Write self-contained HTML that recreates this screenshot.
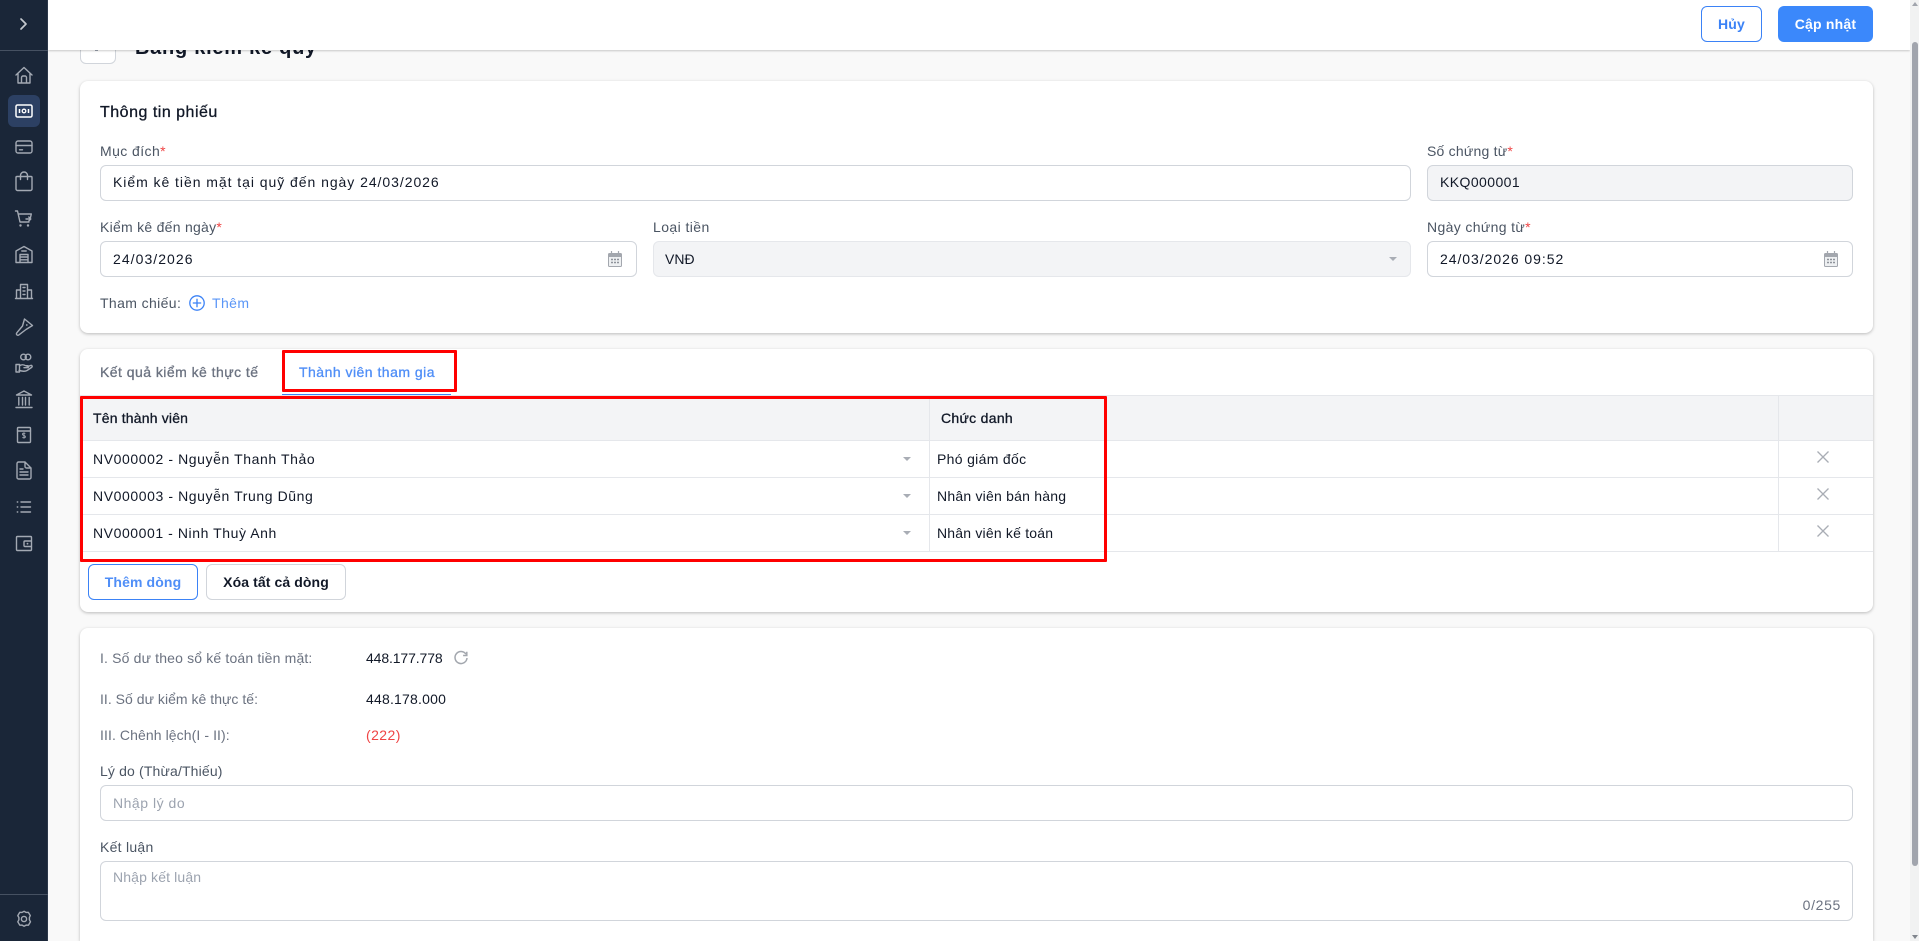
<!DOCTYPE html>
<html lang="vi"><head><meta charset="utf-8"><title>Bảng kiểm kê quỹ</title>
<style>
html,body{margin:0;padding:0;width:1919px;height:941px;overflow:hidden;background:#f9f9f9;font-family:"Liberation Sans",sans-serif;font-size:14px;color:#111827}
div,span{box-sizing:border-box}
.a{position:absolute}
.t{position:absolute;line-height:20px;height:20px;white-space:nowrap;letter-spacing:.42px}
.l{color:#4b5563}
.m{-webkit-text-stroke:.3px currentColor}
.card{position:absolute;background:#fff;border-radius:8px;box-shadow:0 1px 3px rgba(0,0,0,.25)}
.inp{position:absolute;border:1px solid #d1d5db;border-radius:6px;background:#fff}
.dis{background:#f3f4f6}
.req{color:#ef4444}
svg{position:absolute;overflow:visible}
.si{fill:none;stroke:#a3a9b3;stroke-width:1.4;stroke-linecap:round;stroke-linejoin:round}
.line{position:absolute;background:#e5e7eb}
.red{position:absolute;border:3px solid #f00;border-radius:1px}
.caret{position:absolute;width:0;height:0;border-left:4px solid transparent;border-right:4px solid transparent;border-top:4px solid #a9adb5}
</style></head><body>

<!-- page title under header -->
<div class="a" style="left:80px;top:20px;width:36px;height:44px;background:#fff;border:1px solid #d1d5db;border-radius:6px"></div>
<div class="a" style="left:95px;top:50px;width:3px;height:1px;background:#9ca3af"></div>
<div class="t" style="left:135px;top:38px;font-size:20px;font-weight:700;letter-spacing:.74px;color:#111827;line-height:20px">Bảng kiểm kê quỹ</div>

<!-- header -->
<div class="a" style="left:48px;top:0;width:1862px;height:50px;background:#fff;box-shadow:0 1px 2px rgba(0,0,0,.2)"></div>
<div class="a" style="left:1701px;top:6px;width:61px;height:36px;border:1px solid #3b82f6;border-radius:6px;background:#fff;color:#3b82f6;text-align:center;line-height:34px;font-weight:700;letter-spacing:.2px">Hủy</div>
<div class="a" style="left:1778px;top:6px;width:95px;height:36px;border-radius:6px;background:#3b88fb;color:#fff;text-align:center;line-height:36px;font-weight:700;letter-spacing:.2px">Cập nhật</div>

<!-- scrollbar -->
<div class="a" style="left:1910px;top:0;width:9px;height:941px;background:#f1f2f2"></div>
<div class="a" style="left:1912px;top:42px;width:6px;height:824px;background:#a1a5ad;border-radius:3px"></div>
<div class="a" style="left:1912px;top:2px;width:0;height:0;border-left:3px solid transparent;border-right:3px solid transparent;border-bottom:4px solid #a1a5ad"></div>
<div class="a" style="left:1912px;top:935px;width:0;height:0;border-left:3px solid transparent;border-right:3px solid transparent;border-top:4px solid #80858d"></div>

<!-- sidebar -->
<div class="a" style="left:0;top:0;width:48px;height:941px;background:#1a2638;border-right:1px solid #2c384a"></div>
<div class="a" style="left:0;top:50px;width:48px;height:1px;background:#465162"></div>
<div class="a" style="left:0;top:894px;width:48px;height:1px;background:#465162"></div>
<div class="a" style="left:8px;top:95px;width:32px;height:32px;background:#2c4063;border-radius:6px"></div>

<svg style="left:0;top:0" width="48" height="941" viewBox="0 0 48 941">
 <path d="M21 19l5 5-5 5" fill="none" stroke="#c5c9cf" stroke-width="1.7" stroke-linecap="round" stroke-linejoin="round"/>
 <!-- home -->
 <path class="si" d="M16 75l8-7.500 8 7.500M18 73.500v9.500h12v-9.500M21.500 83v-5.500a1.500 1.500 0 0 1 1.500-1.500h2a1.500 1.500 0 0 1 1.500 1.500V83"/>
 <!-- cash -->
 <rect x="16" y="105" width="16" height="12" rx="1.500" fill="none" stroke="#fff" stroke-width="1.500"/>
 <circle cx="24" cy="111" r="1.800" fill="none" stroke="#fff" stroke-width="1.300"/>
 <path d="M19.500 109v4M28.500 109v4" stroke="#fff" stroke-width="1.500"/>
 <!-- card -->
 <rect class="si" x="16" y="141" width="16" height="12" rx="2"/><path class="si" d="M16 145.500h16M19.500 149.800h3"/>
 <!-- bag -->
 <path class="si" d="M17 176.500h14a1 1 0 0 1 1 1V189a1.500 1.500 0 0 1-1.500 1.500h-13A1.500 1.500 0 0 1 16 189v-11.500a1 1 0 0 1 1-1zM20.500 179.500v-4a3.500 3.500 0 0 1 7 0v4"/>
 <!-- cart -->
 <path class="si" d="M15.500 211h2l2.500 11h9M18.300 214h13l-.8 3.500M26 219h4.500M28.800 217l2 2-2 2"/>
 <circle cx="20.500" cy="225.500" r="1.200" fill="#a3a9b3"/><circle cx="28" cy="225.500" r="1.200" fill="#a3a9b3"/>
 <!-- warehouse -->
 <path class="si" d="M16 251l8-4.500 8 4.500v11.500H16zM20 262.500v-8h8v8M20 257h8M20 259.800h8M21.800 251h4.400"/>
 <!-- building -->
 <path class="si" d="M15.500 298.500h17M16.500 298.500V290h4M31.500 298.500V290h-4M20.500 298.500v-14h7v14M23 287.500h2M23 291h2M23 294.500h2"/>
 <!-- tool -->
 <path class="si" d="M24.500 319l8 6.500-6.500 4-7 5.300a1.300 1.300 0 0 1-2.200-2l5.700-6.800z"/><circle cx="26.800" cy="325" r=".9" fill="#a3a9b3"/>
 <!-- hand -->
 <circle class="si" cx="23.500" cy="357" r="2.800"/><circle class="si" cx="28" cy="357" r="2.800"/>
 <path class="si" d="M16 364.500h3.500v7.500H16zM19.500 365.700c2.500-1.500 4-1.200 6 0h2c1.300 0 1.300 2 0 2h-3.500M27 367l3.500-1.500c1.500-.5 2.300 1 1 2l-4.500 3c-2 1.200-5 .8-8-.2"/>
 <!-- bank -->
 <path class="si" d="M16.500 395l7.500-4 7.500 4zM16 407.500h16M18.800 397.500v7.500M22.500 397.500v7.500M25.500 397.500v7.500M29.200 397.500v7.500"/>
 <!-- dollar book -->
 <rect class="si" x="17.500" y="427.500" width="13" height="15" rx="1"/><path class="si" d="M17.500 431h13"/>
 <path d="M25.300 433.500c-.8-.6-2.800-.7-2.800.7 0 1.500 2.900 1 2.900 2.600 0 1.400-2.100 1.300-3 .6M24 432.500v6" fill="none" stroke="#a3a9b3" stroke-width=".9"/>
 <!-- doc -->
 <path class="si" d="M19 462h6l6 6v9.500a1.500 1.500 0 0 1-1.500 1.500h-11a1.500 1.500 0 0 1-1.500-1.500v-14a1.500 1.500 0 0 1 1.500-1.500zM25 462v4.500a1.500 1.500 0 0 0 1.500 1.500H31M20 469h3M20 472h8M20 475h8"/>
 <!-- list -->
 <path class="si" d="M21 502h9.500M21 507h9.500M21 512h9.500M17.300 502h.4M17.300 507h.4M17.300 512h.4" stroke-width="1.500"/>
 <!-- wallet -->
 <path class="si" d="M17.500 536.500h13a1 1 0 0 1 1 1v12a1 1 0 0 1-1 1h-13a1 1 0 0 1-1-1v-12a1 1 0 0 1 1-1zM25 541h6.500v5.500H25a1 1 0 0 1-1-1V542a1 1 0 0 1 1-1z"/><circle cx="27.500" cy="543.700" r=".9" fill="#a3a9b3"/>
 <!-- gear -->
 <path class="si" d="M24 911.300l2 1.100 2.300-.1 2 3.300-.9 1.900v2.300l1.100 2-2.100 3.400-2.300-.1-2 1.100-2-1.100-2.300.1-2-3.400 1.100-2v-2.300l-1.100-1.900 2-3.300 2.300.1z"/>
 <circle class="si" cx="24" cy="919" r="2.600"/>
</svg>

<!-- CARD 1 -->
<div class="card" style="left:80px;top:81px;width:1793px;height:252px"></div>
<div class="t m" style="left:100px;top:103px;font-size:16px;letter-spacing:.5px">Thông tin phiếu</div>

<div class="t l" style="left:100px;top:141px">Mục đích<span class="req">*</span></div>
<div class="inp" style="left:100px;top:165px;width:1311px;height:36px"></div>
<div class="t" style="left:113px;top:172px;letter-spacing:.95px">Kiểm kê tiền mặt tại quỹ đến ngày 24/03/2026</div>

<div class="t l" style="left:1427px;top:141px;letter-spacing:.22px">Số chứng từ<span class="req">*</span></div>
<div class="inp dis" style="left:1427px;top:165px;width:426px;height:36px"></div>
<div class="t" style="left:1440px;top:172px">KKQ000001</div>

<div class="t l" style="left:100px;top:217px;letter-spacing:.27px">Kiểm kê đến ngày<span class="req">*</span></div>
<div class="inp" style="left:100px;top:241px;width:537px;height:36px"></div>
<div class="t" style="left:113px;top:249px;letter-spacing:1.05px">24/03/2026</div>

<div class="t l" style="left:653px;top:217px">Loại tiền</div>
<div class="inp dis" style="left:653px;top:241px;width:758px;height:36px;border-color:#e5e7eb"></div>
<div class="t" style="left:665px;top:249px;letter-spacing:0">VNĐ</div>
<div class="caret" style="left:1389px;top:257px"></div>

<div class="t l" style="left:1427px;top:217px;letter-spacing:.36px">Ngày chứng từ<span class="req">*</span></div>
<div class="inp" style="left:1427px;top:241px;width:426px;height:36px"></div>
<div class="t" style="left:1440px;top:249px;letter-spacing:.95px">24/03/2026 09:52</div>

<svg style="left:608px;top:251px" width="14" height="16" viewBox="0 0 14 16"><rect x=".5" y="2.500" width="13" height="13" rx="1" fill="#eef0f2" stroke="#a3a7ae"/><rect x=".5" y="2.500" width="13" height="3.500" fill="#a3a7ae"/><path d="M3.500 0v3M10.500 0v3" stroke="#a3a7ae" stroke-width="1.200"/><path d="M3 8.500h2M6 8.500h2M9 8.500h2M3 11.500h2M6 11.500h2M9 11.500h2" stroke="#8f939b" stroke-width="1.400"/></svg>
<svg style="left:1824px;top:251px" width="14" height="16" viewBox="0 0 14 16"><rect x=".5" y="2.500" width="13" height="13" rx="1" fill="#eef0f2" stroke="#a3a7ae"/><rect x=".5" y="2.500" width="13" height="3.500" fill="#a3a7ae"/><path d="M3.500 0v3M10.500 0v3" stroke="#a3a7ae" stroke-width="1.200"/><path d="M3 8.500h2M6 8.500h2M9 8.500h2M3 11.500h2M6 11.500h2M9 11.500h2" stroke="#8f939b" stroke-width="1.400"/></svg>

<div class="t l" style="left:100px;top:293px;letter-spacing:.38px">Tham chiếu:</div>
<svg style="left:189px;top:295px" width="16" height="16" viewBox="0 0 16 16"><circle cx="8" cy="8" r="7.200" fill="none" stroke="#3b82f6" stroke-width="1.300"/><path d="M8 3.800v8.400M3.800 8h8.400" stroke="#3b82f6" stroke-width="1.300"/></svg>
<div class="t" style="left:212px;top:293px;color:#5a96f7">Thêm</div>

<!-- CARD 2 -->
<div class="card" style="left:80px;top:349px;width:1793px;height:263px"></div>
<div class="t m" style="left:100px;top:362px;color:#6b7280;letter-spacing:.46px">Kết quả kiểm kê thực tế</div>
<div class="t m" style="left:299px;top:362px;color:#4f8ef7;letter-spacing:.48px">Thành viên tham gia</div>
<div class="a" style="left:282px;top:394px;width:169px;height:2px;background:#3b82f6"></div>

<!-- table -->
<div class="a" style="left:80px;top:396px;width:1793px;height:44px;background:#f3f4f6"></div>
<div class="line" style="left:80px;top:395px;width:1793px;height:1px"></div>
<div class="line" style="left:80px;top:440px;width:1793px;height:1px"></div>
<div class="line" style="left:80px;top:477px;width:1793px;height:1px"></div>
<div class="line" style="left:80px;top:514px;width:1793px;height:1px"></div>
<div class="line" style="left:80px;top:551px;width:1793px;height:1px"></div>
<div class="line" style="left:929px;top:396px;width:1px;height:155px"></div>
<div class="line" style="left:1778px;top:396px;width:1px;height:155px"></div>

<div class="t m" style="left:93px;top:408px;letter-spacing:.18px">Tên thành viên</div>
<div class="t m" style="left:941px;top:408px;letter-spacing:.3px">Chức danh</div>

<div class="t" style="left:93px;top:449px;letter-spacing:.59px">NV000002 - Nguyễn Thanh Thảo</div>
<div class="t" style="left:93px;top:486px;letter-spacing:.59px">NV000003 - Nguyễn Trung Dũng</div>
<div class="t" style="left:93px;top:523px;letter-spacing:.57px">NV000001 - Ninh Thuỳ Anh</div>
<div class="caret" style="left:903px;top:457px"></div>
<div class="caret" style="left:903px;top:494px"></div>
<div class="caret" style="left:903px;top:531px"></div>
<div class="t" style="left:937px;top:449px;letter-spacing:.32px">Phó giám đốc</div>
<div class="t" style="left:937px;top:486px;letter-spacing:.22px">Nhân viên bán hàng</div>
<div class="t" style="left:937px;top:523px;letter-spacing:.2px">Nhân viên kế toán</div>

<svg style="left:1817px;top:451px" width="12" height="12"><path d="M.5.5l11 11M11.500.5l-11 11" stroke="#a9adb5" stroke-width="1.300"/></svg>
<svg style="left:1817px;top:488px" width="12" height="12"><path d="M.5.5l11 11M11.500.5l-11 11" stroke="#a9adb5" stroke-width="1.300"/></svg>
<svg style="left:1817px;top:525px" width="12" height="12"><path d="M.5.5l11 11M11.500.5l-11 11" stroke="#a9adb5" stroke-width="1.300"/></svg>

<div class="red" style="left:282px;top:350px;width:175px;height:42px"></div>
<div class="red" style="left:80px;top:396px;width:1027px;height:166px"></div>

<div class="a" style="left:88px;top:564px;width:110px;height:36px;border:1px solid #3b82f6;border-radius:6px;text-align:center;line-height:34px;color:#4f8ef7;font-weight:700;letter-spacing:.12px">Thêm dòng</div>
<div class="a" style="left:206px;top:564px;width:140px;height:36px;border:1px solid #d1d5db;border-radius:6px;text-align:center;line-height:34px;font-weight:700;letter-spacing:.1px">Xóa tất cả dòng</div>

<!-- CARD 3 -->
<div class="card" style="left:80px;top:628px;width:1793px;height:313px;border-radius:8px 8px 0 0"></div>
<div class="t" style="left:100px;top:648px;color:#6b7280;letter-spacing:.16px">I. Số dư theo sổ kế toán tiền mặt:</div>
<div class="t" style="left:366px;top:648px;letter-spacing:-.12px">448.177.778</div>
<svg style="left:454px;top:651px" width="14" height="14" viewBox="0 0 14 14"><path d="M12 3.200A6 6 0 1 0 13 7" fill="none" stroke="#a3a7ae" stroke-width="1.500"/><path d="M12.800.8v3.700H9.100" fill="none" stroke="#a3a7ae" stroke-width="1.500"/></svg>
<div class="t" style="left:100px;top:689px;color:#6b7280;letter-spacing:.03px">II. Số dư kiểm kê thực tế:</div>
<div class="t" style="left:366px;top:689px;letter-spacing:.2px">448.178.000</div>
<div class="t" style="left:100px;top:725px;color:#6b7280;letter-spacing:.09px">III. Chênh lệch(I - II):</div>
<div class="t" style="left:366px;top:725px;color:#ef4444">(222)</div>

<div class="t l" style="left:100px;top:761px;letter-spacing:.15px">Lý do (Thừa/Thiếu)</div>
<div class="inp" style="left:100px;top:785px;width:1753px;height:36px"></div>
<div class="t" style="left:113px;top:793px;color:#9ca3af;letter-spacing:.52px">Nhập lý do</div>

<div class="t l" style="left:100px;top:837px;letter-spacing:.27px">Kết luận</div>
<div class="inp" style="left:100px;top:861px;width:1753px;height:60px"></div>
<div class="t" style="left:113px;top:867px;color:#9ca3af;letter-spacing:.14px">Nhập kết luận</div>
<div class="t" style="right:78px;top:895px;color:#6b7280;letter-spacing:.67px">0/255</div>

</body></html>
